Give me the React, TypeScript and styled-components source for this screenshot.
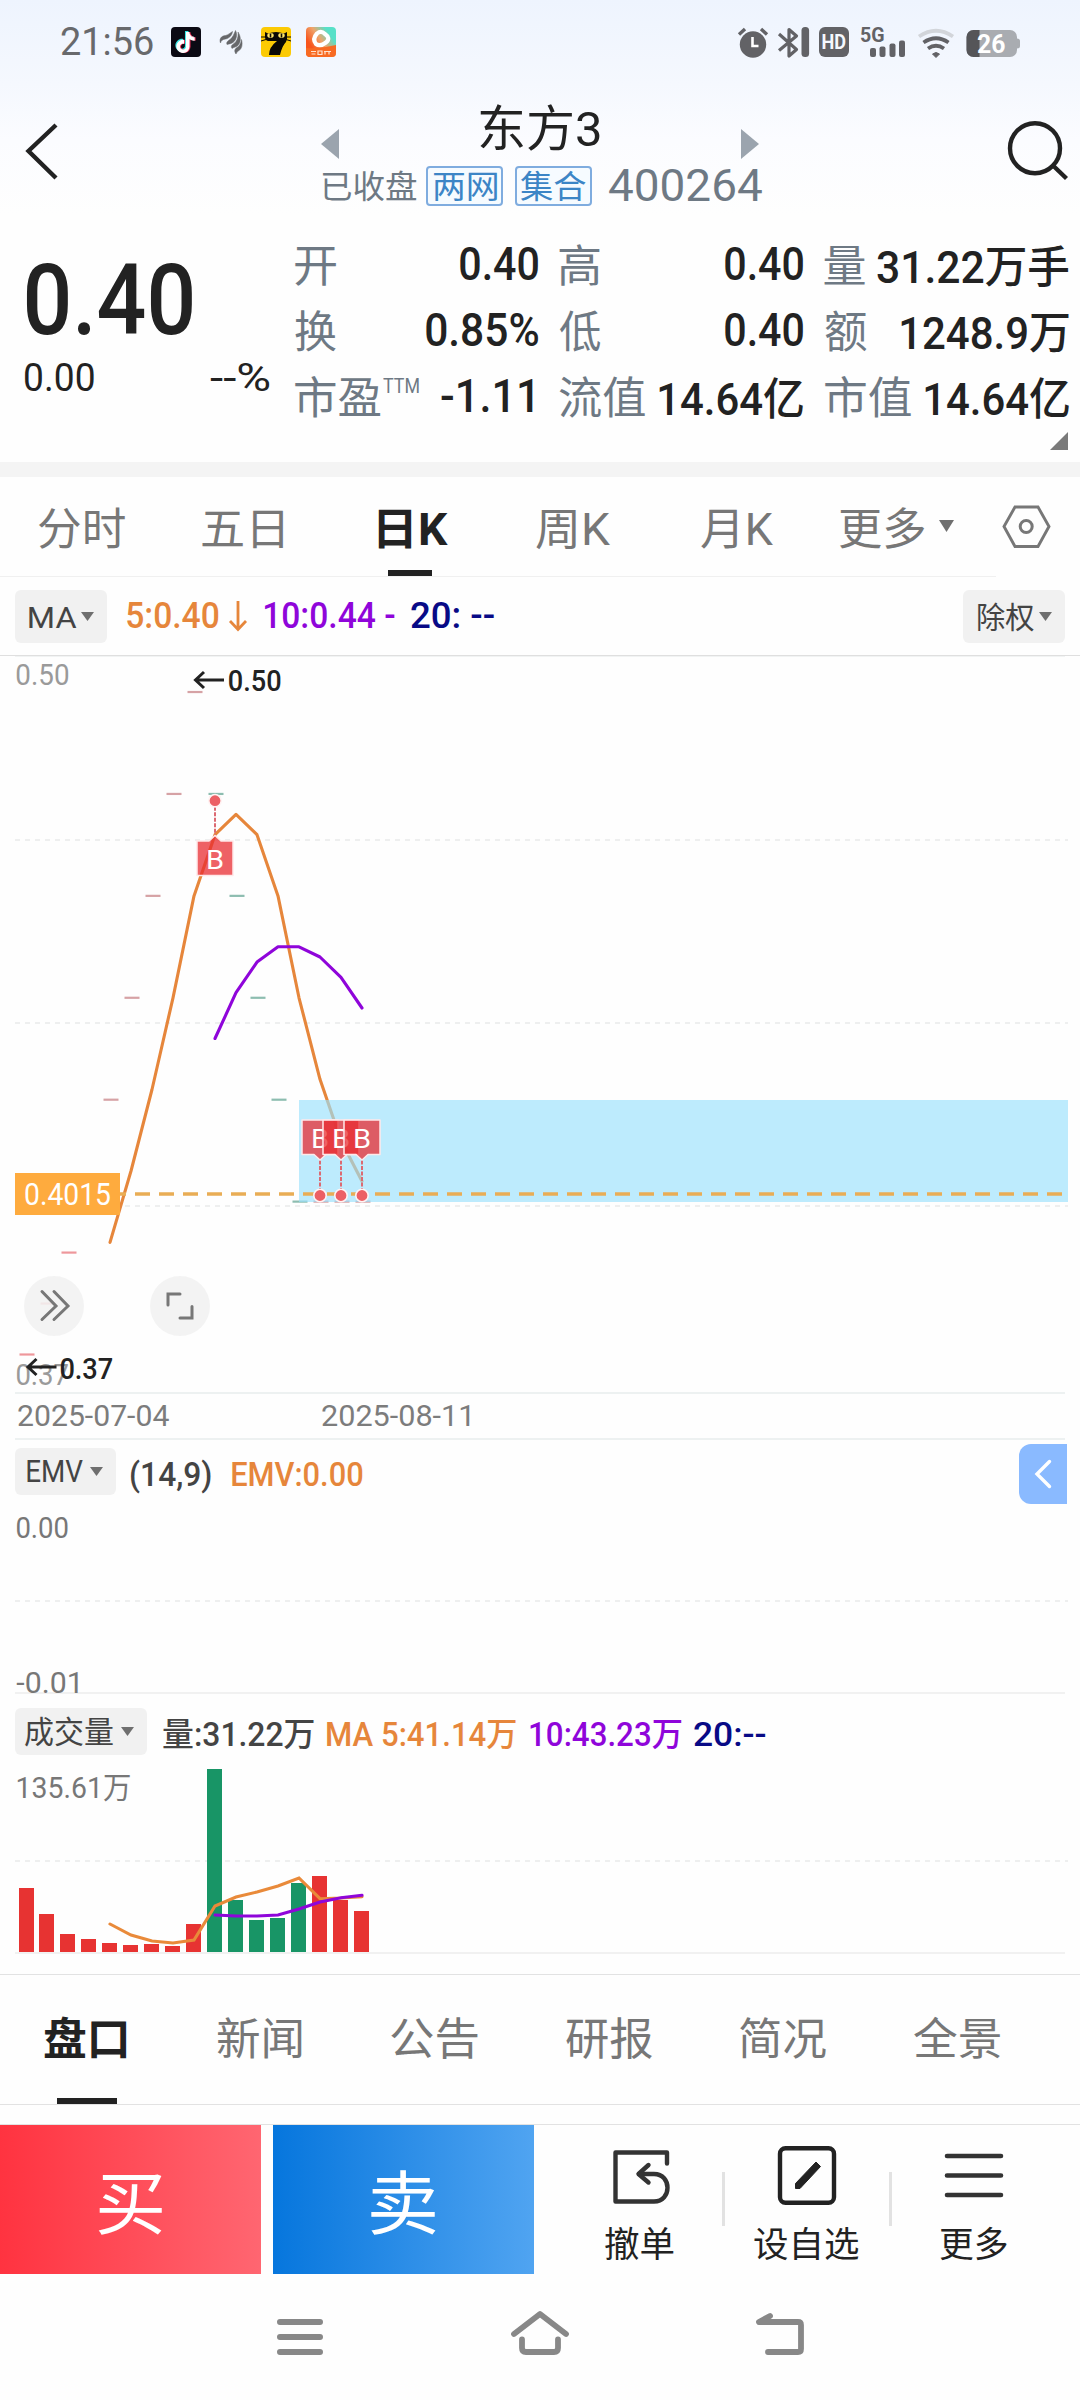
import React from "react";
import styled, { createGlobalStyle } from "styled-components";
import { SiTiktok } from "react-icons/si";

const FONT = '"Roboto", "Noto Sans CJK SC", sans-serif';

const ink = "#222222";
const slate = "#6e7984";
const grey = "#777777";
const orange = "#e6863b";
const purple = "#8f05da";
const navy = "#080a86";
const red = "#e73332";
const green = "#189566";

const Global = createGlobalStyle`
  * { box-sizing: border-box; }
  html, body { margin: 0; padding: 0; background: #fefefe; }
  body { font-family: ${FONT}; width: 1080px; overflow-x: hidden; }
  svg { display: block; flex: none; overflow: visible; }
`;

/* ---------- text fitted to a given drawn width ---------- */

let ctx: CanvasRenderingContext2D | null = null;
function fit(text: string, size: number, weight: number, width: number) {
  if (!ctx) ctx = document.createElement("canvas").getContext("2d");
  if (!ctx) return { scale: 1, shift: 0 };
  ctx.font = `${weight} ${size}px ${FONT}`;
  const m = ctx.measureText(text);
  const drawn = m.actualBoundingBoxLeft + m.actualBoundingBoxRight;
  const scale = width / drawn;
  return { scale, shift: m.actualBoundingBoxLeft * scale };
}

const LabelBox = styled.span<{ $w: number; $s: number; $c: string; $wt: number; $ml: number; $mt: number; $mr: number }>`
  display: block;
  flex: none;
  width: ${(p) => p.$w}px;
  height: ${(p) => p.$s}px;
  line-height: ${(p) => p.$s}px;
  font-size: ${(p) => p.$s}px;
  font-weight: ${(p) => p.$wt};
  color: ${(p) => p.$c};
  margin-left: ${(p) => p.$ml}px;
  margin-right: ${(p) => p.$mr}px;
  margin-top: ${(p) => p.$mt}px;
  white-space: pre;
`;
const LabelInner = styled.span`
  display: inline-block;
  transform-origin: 0 50%;
`;

type LabelProps = {
  children: string;
  w: number;
  s: number;
  c?: string;
  wt?: number;
  ml?: number;
  mt?: number;
  mr?: number;
};
function Label({ children, w, s, c = ink, wt = 400, ml = 0, mt = 0, mr = 0 }: LabelProps) {
  const f = fit(children, s, wt, w);
  return (
    <LabelBox $w={w} $s={s} $c={c} $wt={wt} $ml={ml} $mt={mt} $mr={mr}>
      <LabelInner style={{ transform: `translateX(${f.shift}px) scaleX(${f.scale})` }}>{children}</LabelInner>
    </LabelBox>
  );
}

/** Chart annotation: x is the left edge, y the baseline. */
function ChartText({ x, y, w, s, c, wt = 400, children }: { x: number; y: number; w: number; s: number; c: string; wt?: number; children: string }) {
  const f = fit(children, s, wt, w);
  return (
    <text
      transform={`translate(${x + f.shift} ${y}) scale(${f.scale} 1)`}
      fontFamily={FONT}
      fontSize={s}
      fontWeight={wt}
      fill={c}
    >
      {children}
    </text>
  );
}

/* ---------- page shell ---------- */

const Page = styled.main`
  width: 1080px;
  height: 2400px;
  overflow: hidden;
  display: flex;
  flex-direction: column;
  background: linear-gradient(180deg, #eef4fe 0, #f5f8fe 84px, #fbfcff 140px, #fefefe 214px);
`;

const StatusBar = styled.div`
  display: flex;
  align-items: center;
  flex: none;
  height: 84px;
  padding-left: 61px;
`;
const AppIcons = styled.div`
  display: flex;
  align-items: center;
  margin-left: 17px;
`;
const AppTile = styled.div<{ $bg: string; $ml?: number }>`
  width: 30px;
  height: 30px;
  border-radius: 4px;
  margin-left: ${(p) => p.$ml ?? 0}px;
  background: ${(p) => p.$bg};
  display: flex;
  align-items: center;
  justify-content: center;
  overflow: hidden;
`;
const NoteStack = styled.div`
  display: grid;
  place-items: center;
  svg { grid-area: 1 / 1; }
  svg:nth-child(1) { color: #35e6e6; margin: 0 2px 1px 0; }
  svg:nth-child(2) { color: #f2305a; margin: 1px 0 0 2px; }
  svg:nth-child(3) { color: #ffffff; }
`;

const Header = styled.header`
  display: flex;
  align-items: flex-start;
  flex: none;
  height: 147px;
`;
const BackBtn = styled.div`
  margin: 36px 0 0 25px;
`;
const TitleCol = styled.div`
  width: 442px;
  margin: 21px 0 0 262px;
`;
const TitleRow = styled.div`
  display: flex;
  justify-content: space-between;
  align-items: flex-end;
  height: 54px;
  padding-right: 4px;
`;
const TitleText = styled.div`
  align-self: flex-start;
`;
const SubRow = styled.div`
  display: flex;
  align-items: center;
  height: 40px;
  margin-top: 7px;
`;
const Tag = styled.span<{ $ml: number }>`
  display: flex;
  align-items: center;
  justify-content: center;
  width: 77px;
  height: 40px;
  margin-left: ${(p) => p.$ml}px;
  border: 2px solid #7facdf;
  border-radius: 4px;
  background: #f6fbff;
`;
const SearchBtn = styled.div`
  margin: 34px 0 0 242px;
`;

/* ---------- quote ---------- */

const Quote = styled.section`
  display: flex;
  flex: none;
  height: 231px;
`;
const PriceCol = styled.div`
  width: 245.5px;
  margin-left: 24.5px;
  padding-top: 21px;
`;
const ChangeRow = styled.div`
  display: flex;
  justify-content: space-between;
  margin-top: 8px;
`;
const StatsCol = styled.div`
  display: flex;
  flex-direction: column;
  align-items: flex-end;
  margin-left: 25px;
`;
const Stats = styled.div`
  display: grid;
  grid-template-columns: 243px 244px 244px;
  grid-auto-rows: 66px;
  column-gap: 21.3px;
`;
const Stat = styled.div`
  display: flex;
  align-items: center;
  justify-content: space-between;
`;
const StatKey = styled.div`
  display: flex;
  align-items: center;
`;
const Corner = styled.div`
  margin-top: 3px;
`;
const Band = styled.div`
  flex: none;
  height: 15px;
  background: #f4f4f4;
`;

/* ---------- period tabs ---------- */

const PeriodBar = styled.nav`
  display: flex;
  flex: none;
  height: 100px;
`;
const PeriodTabs = styled.div`
  display: flex;
  width: 996px;
  border-bottom: 1px solid #f0f0f0;
`;
const Tab = styled.div<{ $w: number }>`
  width: ${(p) => p.$w}px;
  display: flex;
  flex-direction: column;
  align-items: center;
`;
const TabBody = styled.div<{ $pt: number; $shift?: number }>`
  flex: 1;
  display: flex;
  align-items: center;
  padding-top: ${(p) => p.$pt}px;
  margin-left: ${(p) => (p.$shift ?? 0) * 2}px;
`;
const TabLine = styled.i<{ $w: number; $on: boolean }>`
  width: ${(p) => p.$w}px;
  height: 6px;
  background: ${(p) => (p.$on ? ink : "transparent")};
`;
const GearSlot = styled.div`
  display: flex;
  align-items: center;
  margin-left: 5px;
`;

/* ---------- indicator heads ---------- */

const Indicators = styled.div`
  display: flex;
  align-items: center;
  flex: none;
  height: 79px;
  padding: 0 15px;
  border-bottom: 1px solid #dfdfdf;
`;
const Pill = styled.div<{ $w: number; $h: number; $mt?: number }>`
  display: flex;
  flex: none;
  align-items: center;
  width: ${(p) => p.$w}px;
  height: ${(p) => p.$h}px;
  margin-top: ${(p) => p.$mt ?? 0}px;
  border-radius: 6px;
  background: #f1f1f1;
`;
const SmallArrow = styled.span`
  margin-left: 10.5px;
`;
const Push = styled.div`
  margin-left: auto;
`;
const SubHead = styled.div<{ $h: number }>`
  display: flex;
  align-items: flex-start;
  flex: none;
  height: ${(p) => p.$h}px;
  padding: 0 13px 0 15px;
`;
const SideHandle = styled.div`
  display: flex;
  align-items: center;
  justify-content: center;
  width: 48px;
  height: 60px;
  margin: 4px 0 0 auto;
  border-radius: 12px 0 0 12px;
  background: #8abaff;
`;

/* ---------- charts ---------- */

const ChartWrap = styled.div`
  position: relative;
  flex: none;
`;
const RoundBtn = styled.div<{ $x: number }>`
  position: absolute;
  left: ${(p) => p.$x}px;
  bottom: 58px;
  width: 60px;
  height: 60px;
  border-radius: 50%;
  background: rgba(241, 241, 241, 0.88);
  display: flex;
  align-items: center;
  justify-content: center;
`;
const DateRow = styled.div`
  display: flex;
  align-items: center;
  flex: none;
  height: 46px;
  margin: 0 15px;
  padding-left: 2.6px;
  border-bottom: 2px solid #edf1f1;
`;

/* ---------- bottom ---------- */

const InfoTabs = styled.nav`
  display: flex;
  flex: none;
  height: 131px;
  margin-top: 20px;
  border-top: 1px solid #e2e2e2;
  border-bottom: 1px solid #e2e2e2;
`;
const ActionBar = styled.div`
  display: flex;
  flex: none;
  height: 150px;
  margin-top: 19px;
  border-top: 1px solid #e2e2e2;
`;
const Trade = styled.div<{ $from: string; $to: string }>`
  display: flex;
  align-items: center;
  justify-content: center;
  width: 261px;
  margin-right: 12px;
  padding-top: 12px;
  background: linear-gradient(90deg, ${(p) => p.$from}, ${(p) => p.$to});
`;
const Actions = styled.div`
  display: flex;
  margin-left: 12px;
`;
const Action = styled.div`
  display: flex;
  flex-direction: column;
  align-items: center;
  width: 164px;
  padding-top: 21px;
`;
const Rule = styled.i`
  width: 3px;
  height: 54px;
  margin-top: 47px;
  background: #e2e2e2;
`;
const NavBar = styled.div`
  display: grid;
  grid-template-columns: repeat(3, 240px);
  justify-content: center;
  align-items: center;
  justify-items: center;
  flex: none;
  height: 126px;
`;

/* ---------- small icons ---------- */

const CaretBox = styled.span<{ $ml: number; $mt: number }>`
  margin-left: ${(p) => p.$ml}px;
  margin-top: ${(p) => p.$mt}px;
`;
const Caret = ({ ml, w = 13, h = 9, mt = 0 }: { ml: number; w?: number; h?: number; mt?: number }) => (
  <CaretBox $ml={ml} $mt={mt}>
    <svg width={w} height={h} viewBox="0 0 13 9" preserveAspectRatio="none">
      <path d="M0 0H13L6.5 9Z" fill="#6f6f6f" />
    </svg>
  </CaretBox>
);

const StatusRight = styled.div`
  margin-left: auto;
  margin-right: 55px;
`;
const StatusIcons = () => (
  <svg width="290" height="36" viewBox="735 24 290 36">
    <g fill="#626266">
      <circle cx="753" cy="44.5" r="13.2" />
      <path d="M739 34.5l6-5.5M767 34.5l-6-5.5" stroke="#626266" strokeWidth="3.4" />
      <path d="M752.5 37v9h6" stroke="#fff" strokeWidth="2.6" fill="none" />
      <path d="M779 34l17.5 15.5-7.5 6.500V29.5l7.500 6.500L779 50.5" fill="none" stroke="#626266" strokeWidth="3.2" strokeLinejoin="round" />
      <rect x="801.5" y="27" width="7.6" height="30" rx="3.5" />
      <rect x="819" y="27" width="30" height="30" rx="6" />
      <rect x="870" y="48" width="6" height="9" rx="2" />
      <rect x="879.5" y="46.5" width="6" height="10.5" rx="2" />
      <rect x="889.5" y="43.5" width="6" height="13.5" rx="2" />
      <rect x="899" y="40.5" width="6" height="16.5" rx="2" />
      <path d="M932.5 54q3.5-3 7 0l-3.5 3.5z" stroke="#626266" strokeWidth="1" />
    </g>
    <ChartText x={822.5} y={49} w={23} s={19.5} c="#f5f8fe" wt={700}>HD</ChartText>
    <ChartText x={861} y={42} w={23} s={20} c="#626266" wt={700}>5G</ChartText>
    <g fill="none" strokeWidth="3.8">
      <path d="M919 36.500q17-11.500 34 0" stroke="#d2d5da" />
      <path d="M923.5 42.500q12.500-8.500 25 0" stroke="#626266" />
      <path d="M928 48.500q8-5.500 16 0" stroke="#626266" />
    </g>
    <clipPath id="battery"><rect x="966.5" y="30" width="50.5" height="27" rx="7" /></clipPath>
    <path d="M1017 38.500q3 0 3 2.500v5q0 2.500-3 2.500z" fill="#a9acb1" />
    <g clipPath="url(#battery)">
      <rect x="966" y="30" width="52" height="27" fill="#a9acb1" />
      <rect x="966" y="30" width="13.5" height="27" fill="#555558" />
    </g>
    <ChartText x={977} y={53} w={28.5} s={26} c="#ffffff" wt={700}>26</ChartText>
  </svg>
);

/* ---------- data ---------- */

const closes = [0.37, 0.38, 0.39, 0.4, 0.42, 0.44, 0.46, 0.48, 0.5, 0.48, 0.46, 0.44, 0.42, 0.4, 0.4, 0.4, 0.4];
const priceX = (i: number) => 26 + i * 21;
const priceY = (p: number) => 698.5 - (p - 0.37) * 5096;

function average(n: number) {
  const pts: string[] = [];
  for (let i = n - 1; i < closes.length; i++) {
    const mean = closes.slice(i - n + 1, i + 1).reduce((a, b) => a + b, 0) / n;
    pts.push(`${priceX(i)},${priceY(mean).toFixed(1)}`);
  }
  return pts.join(" ");
}

const barTops = [128, 154, 174, 179, 183, 185, 184, 186, 164, 9, 140, 160, 158, 123, 116, 140, 151];
const volMa5 = [164, 175, 181, 183, 180, 146, 137, 132, 126, 118, 138.7, 138, 136.7];
const volMa10 = [155, 156, 156, 155, 149, 142, 137.7, 135.3];
const join = (ys: number[], start: number) => ys.map((y, i) => `${26 + (i + start) * 21},${y}`).join(" ");

const Guide = ({ y }: { y: number }) => (
  <line x1="15" x2="1068" y1={y} y2={y} stroke="#eeefef" strokeWidth="2" strokeDasharray="5 5" />
);

function Arrow({ x, y }: { x: number; y: number }) {
  return <path d={`M${x + 30} ${y}H${x + 2}M${x + 10} ${y - 8}L${x + 1.5} ${y}L${x + 10} ${y + 8}`} fill="none" stroke={ink} strokeWidth="3" />;
}

function Buy({ x, dotY, boxY, up }: { x: number; dotY: number; boxY: number; up?: boolean }) {
  const l = x - 18;
  const r = x + 18;
  const b = boxY + 34.5;
  const d = up
    ? `M${l} ${boxY}H${x - 6}L${x} ${boxY - 5.5}L${x + 6} ${boxY}H${r}V${b}H${l}Z`
    : `M${l} ${boxY}H${r}V${b}H${x + 6}L${x} ${b + 5.5}L${x - 6} ${b}H${l}Z`;
  return (
    <g>
      <line x1={x} x2={x} y1={up ? dotY + 6 : b + 6} y2={up ? boxY - 5 : dotY - 6} stroke="#dc6a72" strokeWidth="2" strokeDasharray="4 1.5" />
      <path d={d} fill="#e82c31" fillOpacity="0.75" stroke="#ffe9ea" strokeWidth="1.5" strokeLinejoin="round" />
      <ChartText x={x - 6.8} y={boxY + 27.5} w={14.8} s={25.5} c="#ffffff">B</ChartText>
      <circle cx={x} cy={dotY} r="6.2" fill="#ec6065" stroke="#fff3f3" strokeWidth="1.6" />
    </g>
  );
}

function PriceChart() {
  return (
    <svg width="1080" height="738" viewBox="0 0 1080 738">
      <line x1="15" x2="1065" y1="0.5" y2="0.5" stroke="#f1f3f3" />
      <Guide y={184} />
      <Guide y={367} />
      <Guide y={550} />
      <line x1="15" x2="1065" y1="737" y2="737" stroke="#edf1f1" strokeWidth="2" />
      <ChartText x={16.3} y={29} w={52.5} s={30} c="#9a9a9a">0.50</ChartText>
      <ChartText x={16.3} y={729} w={52} s={30} c="#9a9a9a">0.37</ChartText>
      {closes.map((p, i) => (
        <line
          key={i}
          x1={priceX(i) - 6.5}
          x2={priceX(i) + 8.5}
          y1={priceY(p)}
          y2={priceY(p)}
          strokeWidth="2.2"
          stroke={i > 8 && i < 14 ? "#8dbdb0" : i < 3 ? "#ee979b" : "#d6a2a5"}
        />
      ))}
      <polyline points={average(5)} fill="none" stroke={orange} strokeWidth="3.1" strokeLinecap="round" strokeLinejoin="round" />
      <polyline points={average(10)} fill="none" stroke={purple} strokeWidth="3.1" strokeLinecap="round" strokeLinejoin="round" />
      <rect x="299" y="444" width="769" height="102" fill="rgb(154,225,252)" fillOpacity="0.65" />
      <line x1="111" x2="1068" y1="538" y2="538" stroke="#e9ad55" strokeWidth="3.3" strokeDasharray="15 9" />
      <rect x="15" y="517" width="105" height="42" fill="#feab3e" />
      <ChartText x={25} y={548.5} w={85} s={30.5} c="#ffffff">0.4015</ChartText>
      <Buy x={215} dotY={144.7} boxY={185} up />
      <Buy x={320} dotY={539.5} boxY={464} />
      <Buy x={341} dotY={539.5} boxY={464} />
      <Buy x={362} dotY={539.5} boxY={464} />
      <Arrow x={194} y={24} />
      <ChartText x={228.7} y={35} w={52} s={30} c={ink} wt={500}>0.50</ChartText>
      <Arrow x={26.5} y={711} />
      <ChartText x={60.3} y={723} w={52} s={30} c={ink} wt={500}>0.37</ChartText>
    </svg>
  );
}

const EmvChart = () => (
  <svg width="1080" height="190" viewBox="0 0 1080 190">
    <Guide y={97} />
    <line x1="15" x2="1065" y1="189" y2="189" stroke="#f1f1f1" strokeWidth="2" />
    <ChartText x={16.3} y={34} w={52} s={30} c={grey}>0.00</ChartText>
    <ChartText x={16.3} y={188.5} w={61.5} s={30} c={grey}>-0.01</ChartText>
  </svg>
);

const VolumeChart = () => (
  <svg width="1080" height="194" viewBox="0 0 1080 194">
    <Guide y={101} />
    <line x1="15" x2="1065" y1="193" y2="193" stroke="#f1f1f1" strokeWidth="2" />
    <ChartText x={17.4} y={38} w={113} s={30} c={grey}>135.61万</ChartText>
    {barTops.map((y, i) => (
      <rect key={i} x={i ? 18 + i * 21 : 19} y={y} width="15" height={192 - y} fill={i > 8 && i < 14 ? green : red} />
    ))}
    <polyline points={join(volMa5, 4)} fill="none" stroke="#e98a3a" strokeWidth="3.1" strokeLinecap="round" />
    <polyline points={join(volMa10, 9)} fill="none" stroke={purple} strokeWidth="3.1" strokeLinecap="round" />
  </svg>
);

/* ---------- screen ---------- */

const stats: { k: string; kw: number; v: string; vw: number; sup?: boolean; mr?: number }[] = [
  { k: "开", kw: 41, v: "0.40", vw: 78 },
  { k: "高", kw: 41, v: "0.40", vw: 78 },
  { k: "量", kw: 41, v: "31.22万手", vw: 192 },
  { k: "换", kw: 41, v: "0.85%", vw: 112 },
  { k: "低", kw: 41.5, v: "0.40", vw: 78 },
  { k: "额", kw: 41.5, v: "1248.9万", vw: 168 },
  { k: "市盈", kw: 86, v: "-1.11", vw: 92, sup: true, mr: 5 },
  { k: "流值", kw: 86.5, v: "14.64亿", vw: 144 },
  { k: "市值", kw: 86.5, v: "14.64亿", vw: 144 },
];

const periods = [
  { t: "分时", w: 86.8, shift: -0.5 },
  { t: "五日", w: 81.7, shift: -3.2 },
  { t: "日K", w: 70, shift: 2.6, on: true },
  { t: "周K", w: 74, shift: -1.5 },
  { t: "月K", w: 72, shift: -1.4 },
];

const infoTabs = [
  { t: "盘口", w: 82.3, shift: -1.7, on: true },
  { t: "新闻", w: 84.7, shift: -1.4 },
  { t: "公告", w: 86.4, shift: -0.4 },
  { t: "研报", w: 86.2, shift: -0.4 },
  { t: "简况", w: 86.5, shift: 0 },
  { t: "全景", w: 85.8, shift: -0.4 },
];

export default function App() {
  return (
    <>
      <Global />
      <Page>
        <StatusBar>
          <Label w={92.5} s={39} c="#68696c">21:56</Label>
          <AppIcons>
            <AppTile $bg="#0b0a14">
              <NoteStack>
                <SiTiktok size={21} />
                <SiTiktok size={21} />
                <SiTiktok size={21} />
              </NoteStack>
            </AppTile>
            <AppTile $bg="transparent" $ml={15}>
              <svg width="30" height="30" viewBox="0 0 30 30" fill="#67686b" stroke="#67686b" strokeWidth="0.5">
                <path d="M4.5 16C3 12 5 9 9.5 8.500C12 8 14 6 16.5 4.500C16 9 12.5 11.500 9.5 12C6.5 12.500 5 13.500 4.5 16Z" />
                <path d="M11 17.500C10 15 12 14 14 12.500C17 10 18 7 19.5 3.500C22 8 20 13.500 17 15.500C14.5 17 12 17 11 17.500Z" />
                <path d="M16 21.500C14.5 19.500 15.5 18 18 16.500C21.5 14 22.5 9 22 5C26 11 24.5 17 20.5 19.500C18.5 20.500 17 20.500 16 21.500Z" />
                <path d="M20 27C18 24 18.5 22 21 20.500C24 18.500 25 16 25.5 12.500C27 18 25.5 22 23 23.500C21.5 24.500 20.5 25.500 20 27Z" />
              </svg>
            </AppTile>
            <AppTile $bg="#fcca04" $ml={15}>
              <svg width="30" height="30" viewBox="0 0 30 30">
                <path d="M4 5l3 1.500q8-3 16 0L26 5v7l-1 3q-4 4-6 13H8q0-8 8-14H7q-3-1-3-4z" fill="#0b0905" />
                <ellipse cx="9.5" cy="8.5" rx="3.2" ry="2.4" fill="#ffe66a" />
                <ellipse cx="20.5" cy="8.5" rx="3.2" ry="2.4" fill="#ffe66a" />
                <path d="M9.5 6.500v4M20.5 6.500v4" stroke="#0b0905" strokeWidth="1.6" />
                <path d="M0 10h5M0 14l5-1.500M30 10h-5M30 14l-5-1.500" stroke="#0b0905" strokeWidth="1" />
              </svg>
            </AppTile>
            <AppTile $bg="linear-gradient(55deg,#f8551d 25%,#efa36a 52%,#57e0c8 78%)" $ml={15}>
              <svg width="30" height="30" viewBox="0 0 30 30">
                <path d="M0 21q15 1 30-3v12H0z" fill="#f86a22" />
                <path d="M11 6.500Q15 3 19 7Q25 11 20 15.500Q14 20 10 17Q6 12 11 6.500Z" fill="none" stroke="#fff" strokeWidth="4.2" />
                <path d="M5 24.500h5M5.5 27h4M12 24h4v3.500h-4zM18 24.500h7M19 27.500v-3M23 27.500v-3" stroke="#ffe3cf" strokeWidth="1.2" fill="none" />
              </svg>
            </AppTile>
          </AppIcons>
          <StatusRight>
            <StatusIcons />
          </StatusRight>
        </StatusBar>

        <Header>
          <BackBtn>
            <svg width="34" height="62" viewBox="0 0 34 62">
              <path d="M31 5L3.5 31L31 58" fill="none" stroke={ink} strokeWidth="4.4" />
            </svg>
          </BackBtn>
          <TitleCol>
            <TitleRow>
              <svg width="18" height="30"><path d="M18 0V30L0 15Z" fill="#9ba4ae" /></svg>
              <TitleText><Label w={120} s={49}>东方3</Label></TitleText>
              <svg width="18" height="30"><path d="M0 0V30L18 15Z" fill="#9ba4ae" /></svg>
            </TitleRow>
            <SubRow>
              <Label w={94.5} s={32} c={slate} ml={1} mt={2}>已收盘</Label>
              <Tag $ml={9.5}><Label w={64} s={31.5} c="#3c85c6" mt={4}>两网</Label></Tag>
              <Tag $ml={11.5}><Label w={66} s={31.5} c="#3c85c6" mt={4}>集合</Label></Tag>
              <Label w={153} s={44} c={slate} ml={17}>400264</Label>
            </SubRow>
          </TitleCol>
          <SearchBtn>
            <svg width="68" height="66" viewBox="1005 118 68 66" fill="none" stroke={ink} strokeWidth="4.4">
              <circle cx="1035" cy="148.2" r="25" />
              <path d="M1053.5 166L1066.5 178.5" />
            </svg>
          </SearchBtn>
        </Header>

        <Quote>
          <PriceCol>
            <Label w={166} s={98} wt={500} ml={1.5}>0.40</Label>
            <ChangeRow>
              <Label w={68.5} s={39.5}>0.00</Label>
              <Label w={60} s={39.5}>--%</Label>
            </ChangeRow>
          </PriceCol>
          <StatsCol>
            <Stats>
              {stats.map((s, i) => {
                const cjk = /[万亿]/.test(s.v);
                return (
                  <Stat key={i}>
                    <StatKey>
                      <Label w={s.kw} s={44} c={slate} mt={6}>{s.k}</Label>
                      {s.sup && <Label w={36} s={19.5} c={slate} ml={2} mt={-18}>TTM</Label>}
                    </StatKey>
                    <Label w={s.vw} s={cjk ? 44 : 46} wt={500} mt={cjk ? 8 : -1} mr={s.mr}>{s.v}</Label>
                  </Stat>
                );
              })}
            </Stats>
            <Corner>
              <svg width="19" height="18"><path d="M18 0V18H0Z" fill="#7a7a7a" /></svg>
            </Corner>
          </StatsCol>
        </Quote>
        <Band />

        <PeriodBar>
          <PeriodTabs>
            {periods.map((p) => (
              <Tab key={p.t} $w={164}>
                <TabBody $pt={14} $shift={p.shift}>
                  <Label w={p.w} s={44.5} wt={p.on ? 700 : 400} c={p.on ? ink : grey}>{p.t}</Label>
                </TabBody>
                <TabLine $w={44} $on={!!p.on} />
              </Tab>
            ))}
            <Tab $w={154}>
              <TabBody $pt={14}>
                <Label w={84} s={44.5} c={grey}>更多</Label>
                <Caret ml={15} w={15} h={12} mt={-9} />
              </TabBody>
              <TabLine $w={44} $on={false} />
            </Tab>
          </PeriodTabs>
          <GearSlot>
            <svg width="50" height="46" viewBox="0 0 50 46" fill="none" stroke={grey} strokeWidth="2.9">
              <path d="M14 3H37L48 22.500L37 42.500H14L3 22.500Z" />
              <circle cx="25.2" cy="22.5" r="6" strokeWidth="3" />
            </svg>
          </GearSlot>
        </PeriodBar>

        <Indicators>
          <Pill $w={92} $h={53}>
            <Label w={48} s={30} c="#444444" ml={14} mt={4}>MA</Label>
            <Caret ml={4} />
          </Pill>
          <Label w={91.5} s={36} c={orange} wt={500} ml={19.5}>5:0.40</Label>
          <SmallArrow>
            <svg width="18" height="30" viewBox="0 0 18 30" fill="none" stroke={orange} strokeWidth="2.8">
              <path d="M9 0V28M1 20L9 28.500L17 20" />
            </svg>
          </SmallArrow>
          <Label w={130.5} s={36} c={purple} wt={500} ml={17.3}>10:0.44 -</Label>
          <Label w={83} s={36} c={navy} wt={500} ml={16.5}>20: --</Label>
          <Push>
            <Pill $w={102} $h={53}>
              <Label w={56} s={29.5} c="#444444" ml={14.5} mt={5}>除权</Label>
              <Caret ml={5.5} />
            </Pill>
          </Push>
        </Indicators>

        <ChartWrap>
          <PriceChart />
          <RoundBtn $x={24}>
            <svg width="60" height="60" viewBox="24 0 60 60" fill="none" stroke={grey} strokeWidth="3" strokeLinecap="round">
              <path d="M42 15.500L56 30L42 43.500M54 15.500L68 30L54 43.500" />
            </svg>
          </RoundBtn>
          <RoundBtn $x={150}>
            <svg width="60" height="60" viewBox="0 0 60 60" fill="none" stroke={grey} strokeWidth="3" strokeLinecap="round">
              <path d="M18 29V18H30M30 42H42V30.500" />
            </svg>
          </RoundBtn>
        </ChartWrap>
        <DateRow>
          <Label w={151.5} s={30} c="#7c7c7c">2025-07-04</Label>
          <Label w={147.5} s={30} c="#7c7c7c" ml={153}>2025-08-11</Label>
        </DateRow>

        <SubHead $h={64}>
          <Pill $w={101} $h={47} $mt={8}>
            <Label w={56.5} s={30.5} c="#444444" ml={11.5} mt={1}>EMV</Label>
            <Caret ml={7} />
          </Pill>
          <Label w={80} s={33} c="#444444" wt={500} ml={14.5} mt={18}>(14,9)</Label>
          <Label w={131} s={33} c={orange} wt={500} ml={21} mt={18}>EMV:0.00</Label>
          <SideHandle>
            <svg width="20" height="30" viewBox="0 0 20 30">
              <path d="M16.5 2.500L4 15L16.5 27.500" fill="none" stroke="#fff" strokeWidth="3.4" strokeLinecap="round" />
            </svg>
          </SideHandle>
        </SubHead>
        <EmvChart />

        <SubHead $h={66}>
          <Pill $w={132} $h={47} $mt={14}>
            <Label w={88} s={31} c="#444444" ml={10} mt={2}>成交量</Label>
            <Caret ml={8} />
          </Pill>
          <Label w={151} s={32.5} c="#444444" wt={500} ml={16} mt={24.5}>量:31.22万</Label>
          <Label w={189} s={32.5} c={orange} wt={500} ml={13} mt={24.5}>MA 5:41.14万</Label>
          <Label w={151.5} s={32.5} c={purple} wt={500} ml={14} mt={24.5}>10:43.23万</Label>
          <Label w={71.5} s={32.5} c={navy} wt={500} ml={12.5} mt={24.5}>20:--</Label>
        </SubHead>
        <VolumeChart />

        <InfoTabs>
          {infoTabs.map((t) => (
            <Tab key={t.t} $w={174}>
              <TabBody $pt={8} $shift={t.shift}>
                <Label w={t.w} s={44.5} wt={t.on ? 700 : 400} c={t.on ? ink : grey}>{t.t}</Label>
              </TabBody>
              <TabLine $w={60} $on={!!t.on} />
            </Tab>
          ))}
        </InfoTabs>

        <ActionBar>
          <Trade $from="#ff3340" $to="#ff6671"><Label w={64} s={69} c="#ffffff" mr={2}>买</Label></Trade>
          <Trade $from="#0676dd" $to="#50a4f1"><Label w={65} s={69} c="#ffffff" mr={1}>卖</Label></Trade>
          <Actions>
            <Action>
              <svg width="60" height="60" viewBox="611 2146 60 60" fill="none" stroke="#333" strokeWidth="4.4" strokeLinecap="round" strokeLinejoin="round">
                <path d="M668 2163.500V2152.500H616.5V2201.500H655C673 2201.500 673 2174 655 2174H640" />
                <path d="M649.5 2165L639.5 2174L649.5 2182.500" />
              </svg>
              <Label w={68.5} s={35.5} mt={22} mr={1}>撤单</Label>
            </Action>
            <Rule />
            <Action>
              <svg width="60" height="60" viewBox="777 2146 60 60" fill="none" stroke={ink}>
                <rect x="780" y="2148.2" width="54" height="54.6" rx="5.5" strokeWidth="4.4" />
                <path d="M795.5 2188.500V2183.500L816 2162L820.5 2166.500L800 2188.500Z" fill={ink} />
              </svg>
              <Label w={105} s={35.5} mt={22} mr={1}>设自选</Label>
            </Action>
            <Rule />
            <Action>
              <svg width="60" height="60" viewBox="944 2146 60 60" fill="none" stroke="#333" strokeWidth="4.6" strokeLinecap="round">
                <path d="M947 2156H1001M947 2175.500H1001M947 2195H1001" />
              </svg>
              <Label w={67} s={35.5} mt={22} mr={1}>更多</Label>
            </Action>
          </Actions>
        </ActionBar>

        <NavBar>
          <svg width="64" height="56" viewBox="268 2309 64 56" fill="none" stroke="#888" strokeWidth="6" strokeLinecap="round">
            <path d="M280 2322H320M280 2337H320M280 2352H320" />
          </svg>
          <svg width="64" height="56" viewBox="508 2309 64 56" fill="none" stroke="#888" strokeWidth="5.8" strokeLinecap="round" strokeLinejoin="round">
            <path d="M514 2334L540 2314L566 2334M522 2339.500V2348Q522 2352 526 2352H554Q558 2352 558 2348V2339.500" />
          </svg>
          <svg width="64" height="56" viewBox="748 2309 64 56" fill="none" stroke="#888" strokeWidth="5.8" strokeLinecap="round" strokeLinejoin="round">
            <path d="M770 2316L759 2322H798Q801 2322 801 2325V2349Q801 2352 798 2352H768" />
          </svg>
        </NavBar>
      </Page>
    </>
  );
}
